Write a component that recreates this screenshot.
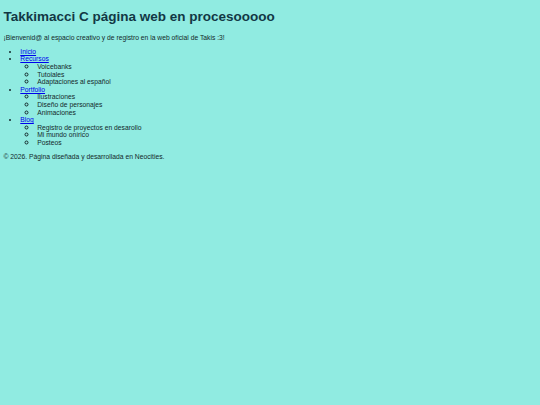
import React from 'react';

const menu = [
  { label: 'Inicio', children: [] },
  { label: 'Recursos', children: ['Voicebanks', 'Tutoiales', 'Adaptaciones al español'] },
  { label: 'Portfolio', children: ['Ilustraciones', 'Diseño de personajes', 'Animaciones'] },
  { label: 'Blog', children: ['Registro de proyectos en desarollo', 'Mi mundo onírico', 'Posteos'] },
];

export default function App() {
  return (
    <div className="min-h-screen bg-[#90ebe1] px-[3.4px] pt-[9px] font-['Liberation_Sans',Arial,sans-serif] text-[6.75px] leading-[7.6px] text-[#13292b]">
      <h1 className="mb-[9px] text-[13.5px] leading-[15.5px] font-bold text-[#123845]">
        Takkimacci C página web en procesooooo
      </h1>
      <p className="mb-[6.75px]">¡Bienvenid@ al espacio creativo y de registro en la web oficial de Takis :3!</p>
      <ul className="mb-[6.75px] list-disc pl-[16.9px]">
        {menu.map((item) => (
          <li key={item.label}>
            <a href="#" className="text-[#0000ee] underline">
              {item.label}
            </a>
            {item.children.length > 0 && (
              <ul className="pl-[16.9px] marker:text-[9px]" style={{ listStyleType: 'circle' }}>
                {item.children.map((c) => (
                  <li key={c}>{c}</li>
                ))}
              </ul>
            )}
          </li>
        ))}
      </ul>
      <footer>
        <p>© 2026. Página diseñada y desarrollada en Neocities.</p>
      </footer>
    </div>
  );
}
